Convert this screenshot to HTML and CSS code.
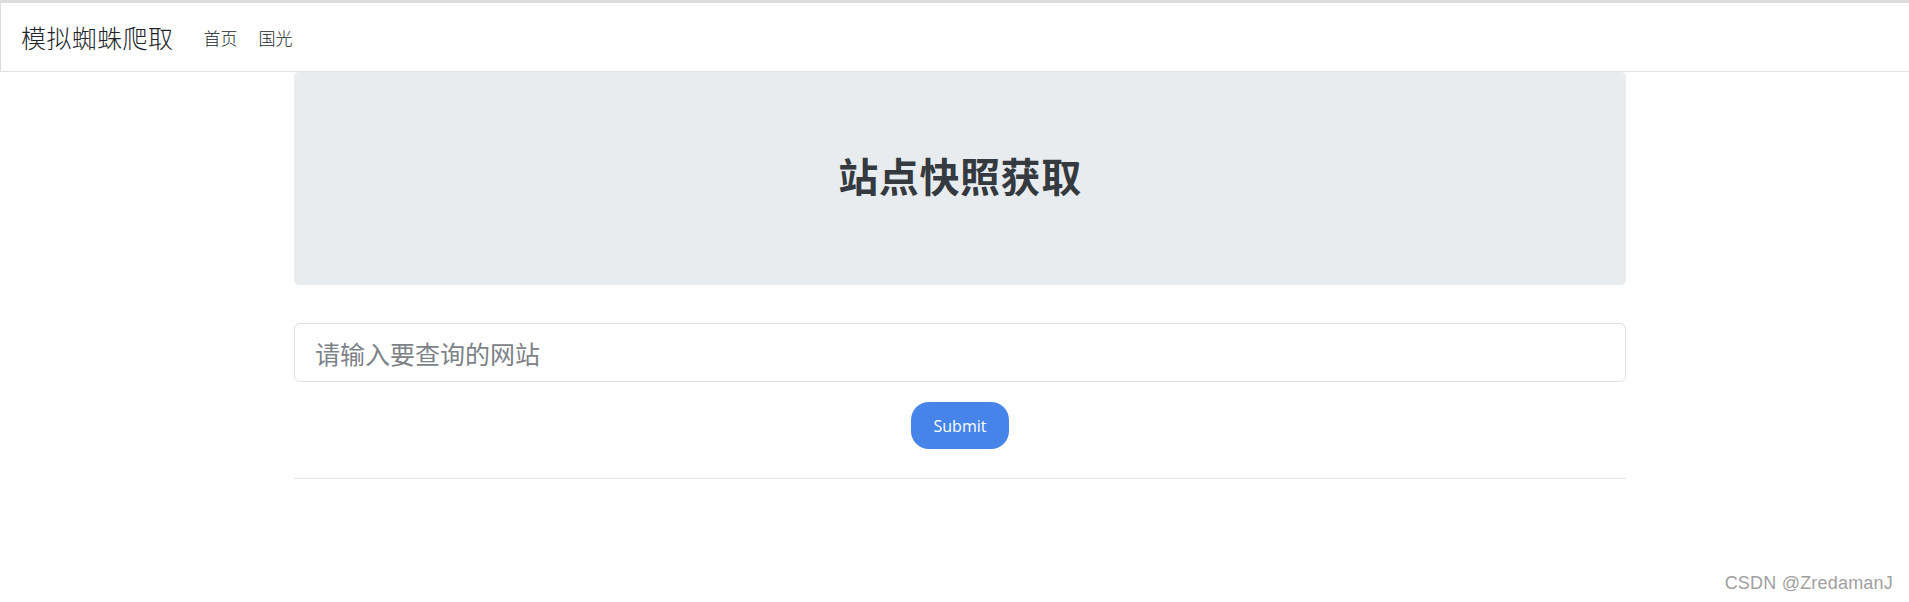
FILE: index.html
```html
<!DOCTYPE html>
<html lang="zh-CN">
<head>
  <meta charset="UTF-8" />
  <meta name="viewport" content="width=device-width, initial-scale=1.0"/>
  <title>模拟蜘蛛爬取</title>
  <link rel="stylesheet" href="styles.css">
</head>
<body>
  <nav class="navbar">
    <a class="brand" href="#">模拟蜘蛛爬取</a>
    <a class="navLink" href="#">首页</a>
    <a class="navLink" href="#">国光</a>
  </nav>

  <div class="main">
    <div class="jumbotron">
      <h1>站点快照获取</h1>
    </div>

    <form class="searchForm" onsubmit="return false">
      <input class="urlInput" type="text" placeholder="请输入要查询的网站">
      <button class="submitBtn" type="submit">Submit</button>
    </form>

    <hr class="divider">
  </div>

  <div class="watermark">CSDN @ZredamanJ</div>
</body>
</html>
```

FILE: styles.css
```css
body {
  margin: 0;
  border-top: 3px solid #dcdcdc;
  font-family: "Noto Sans CJK SC", "Noto Sans", sans-serif;
  color: #212529;
  background-color: #fff;
}

.navbar {
  display: flex;
  align-items: center;
  height: 68px;
  padding-left: 20px;
  border-left: 1px solid #dedede;
  border-bottom: 1px solid #e3e3e3;
}

.navbar a {
  text-decoration: none;
  color: #212529;
}

.brand {
  font-size: 25px;
  letter-spacing: 0.4px;
  margin-right: 30px;
  color: #2b2b2b;
  font-weight: 300;
}

.navLink {
  font-size: 17px;
  margin-right: 21px;
  font-weight: 300;
}

.main {
  width: 1332px;
  margin-left: 294px;
}

.jumbotron {
  height: 213px;
  background-color: #e9ecef;
  border-radius: 5px;
  display: flex;
  align-items: center;
  justify-content: center;
}

.jumbotron h1 {
  margin: 0 0 8px;
  font-size: 40px;
  letter-spacing: 0.6px;
  font-weight: 700;
  color: #343a40;
}

.searchForm {
  display: flex;
  flex-direction: column;
  align-items: center;
  gap: 20px;
  margin-top: 38px;
}

.urlInput {
  box-sizing: border-box;
  width: 100%;
  height: 59px;
  padding: 0 20px;
  border: 1px solid #dfdfdf;
  border-radius: 6px;
  font-family: inherit;
  font-size: 25px;
  outline: none;
}

.urlInput::placeholder {
  color: #7d8288;
}

.submitBtn {
  width: 98px;
  height: 47px;
  border: 0;
  border-radius: 18px;
  background-color: #4684ea;
  color: #fff;
  font-family: "Open Sans", "Noto Sans", sans-serif;
  font-size: 16px;
}

.divider {
  margin: 29px 0 0;
  border: 0;
  border-top: 1px solid #e5e5e5;
}

.watermark {
  position: absolute;
  right: 16px;
  bottom: 8px;
  font-family: "Liberation Sans", Arial, sans-serif;
  font-size: 18px;
  letter-spacing: 0.2px;
  color: #a0a0a0;
}
```
